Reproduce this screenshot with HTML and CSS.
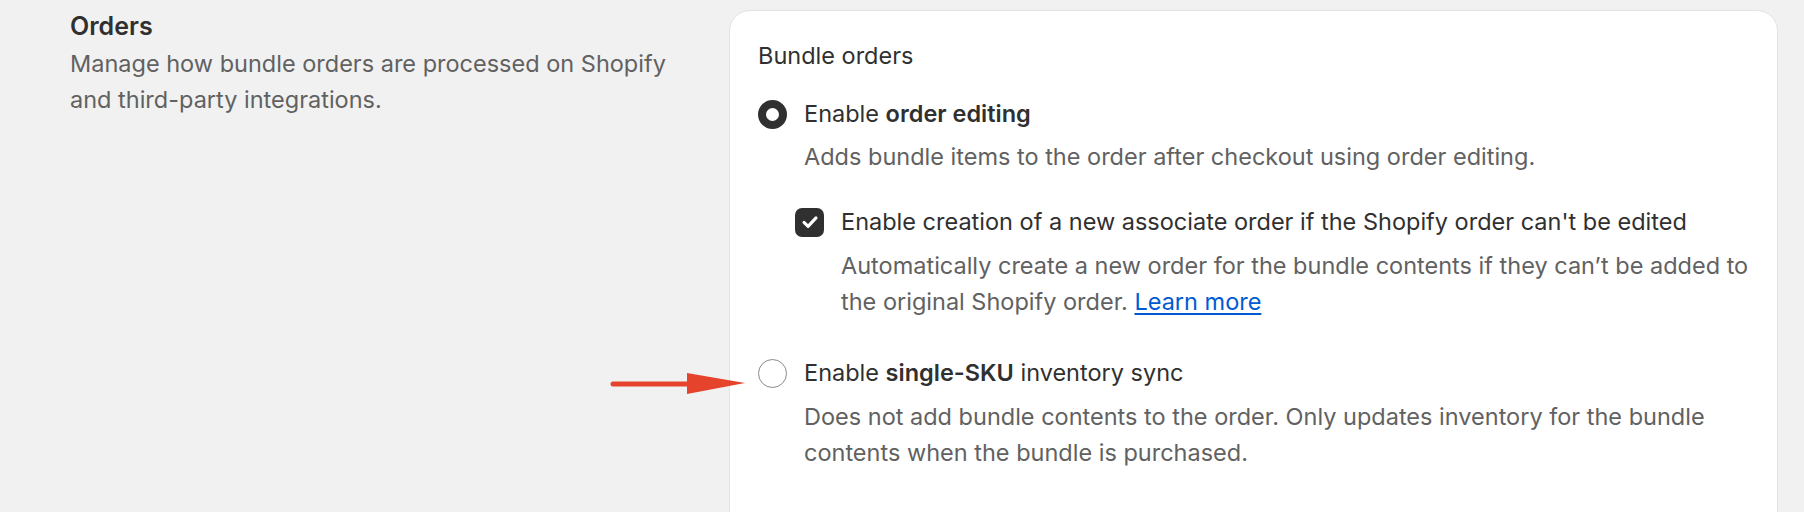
FILE: index.html
```html
<!DOCTYPE html>
<html lang="en">
<head>
<meta charset="utf-8">
<title>Orders settings</title>
<link rel="stylesheet" href="styles.css">
</head>
<body>
<div class="page">
  <div class="info">
    <h2 class="info-title">Orders</h2>
    <p class="info-text">Manage how bundle orders are processed on Shopify and third-party integrations.</p>
  </div>
  <div class="card">
    <div class="card-title">Bundle orders</div>

    <div class="choice choice-first">
      <span class="radio radio-on"></span>
      <span class="label">Enable <b>order editing</b></span>
    </div>
    <p class="help help-radio">Adds bundle items to the order after checkout using order editing.</p>

    <div class="child">
      <div class="choice">
        <span class="checkbox">
          <svg viewBox="0 0 20 20" width="20" height="20"><path d="M5 10.4 L8.4 13.6 L15 6.6" fill="none" stroke="#fff" stroke-width="2.6" stroke-linecap="round" stroke-linejoin="round"/></svg>
        </span>
        <span class="label">Enable creation of a new associate order if the Shopify order can't be edited</span>
      </div>
      <p class="help help-check">Automatically create a new order for the bundle contents if they can’t be added to the original Shopify order. <a class="link" href="#">Learn more</a></p>
    </div>

    <div class="choice choice-second">
      <span class="radio"></span>
      <span class="label">Enable <b>single-SKU</b> inventory sync</span>
    </div>
    <p class="help help-radio help-last">Does not add bundle contents to the order. Only updates inventory for the bundle contents when the bundle is purchased.</p>
  </div>
</div>
<svg class="arrow" width="150" height="30" viewBox="0 0 150 30">
  <line x1="3" y1="14" x2="80" y2="14" stroke="#e5432c" stroke-width="5" stroke-linecap="round"/>
  <polygon points="77,3 135,13 77,24" fill="#e5432c"/>
</svg>
</body>
</html>
```

FILE: styles.css
```css
html, body {
  margin: 0;
  padding: 0;
}
body {
  background: #f1f1f1;
  font-family: Inter, "Noto Sans", "Liberation Sans", sans-serif;
  color: #303030;
  font-size: 23.5px;
  line-height: 36px;
  height: 512px;
  overflow: hidden;
  position: relative;
}
.page {
  display: flex;
  align-items: flex-start;
  gap: 44px;
  padding: 8px 26px 0 70px;
}
.info {
  width: 615px;
  flex: none;
}
.info-title {
  margin: 0;
  font-size: 25px;
  font-weight: 600;
  line-height: 36px;
  color: #303030;
}
.info-text {
  margin: 2px 0 0;
  color: #616161;
  line-height: 36px;
}
.card {
  flex: 1;
  margin-top: 2px;
  background: #fff;
  border: 1.5px solid #e3e3e3;
  border-radius: 21px;
  padding: 27px 16px 80px 28px;
  min-height: 520px;
  box-sizing: border-box;
}
.card-title {
  line-height: 36px;
  color: #303030;
}
.choice {
  display: flex;
  align-items: center;
  height: 36px;
}
.choice-first {
  margin-top: 22px;
}
.choice-second {
  margin-top: 35px;
}
.label {
  color: #303030;
}
.label b {
  font-weight: 600;
}
.radio {
  width: 29px;
  height: 29px;
  box-sizing: border-box;
  border-radius: 50%;
  border: 1.5px solid #8a8a8a;
  background: #fff;
  margin-right: 17px;
  flex: none;
}
.radio-on {
  border: 8.5px solid #303030;
}
.help {
  margin: 0;
  color: #616161;
  line-height: 36px;
}
.help-radio {
  margin-top: 7px;
  padding-left: 46px;
}
.help-last {
  margin-top: 8px;
}
.child {
  margin-top: 29px;
  padding-left: 37px;
}
.checkbox {
  width: 29px;
  height: 29px;
  border-radius: 7px;
  background: #303030;
  margin-right: 17px;
  flex: none;
  display: flex;
  align-items: center;
  justify-content: center;
}
.checkbox svg {
  width: 24px;
  height: 24px;
}
.help-check {
  margin-top: 8px;
  padding-left: 46px;
}
.link {
  color: #005bd3;
  text-decoration: underline;
  text-underline-offset: 3px;
}
.arrow {
  position: absolute;
  left: 610px;
  top: 370px;
}
```
